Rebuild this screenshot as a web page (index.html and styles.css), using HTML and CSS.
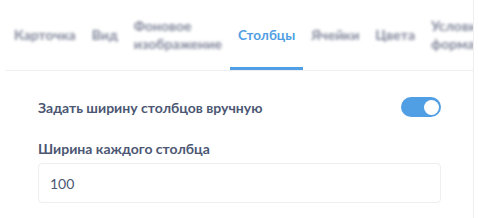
FILE: index.html
```html
<!DOCTYPE html>
<html lang="ru">
<head>
<meta charset="utf-8">
<link rel="stylesheet" href="styles.css">
</head>
<body>
<div class="panel">
  <div class="tabs">
    <div class="tab blur">Карточка</div>
    <div class="tab blur">Вид</div>
    <div class="tab blur">Фоновое<br>изображение</div>
    <div class="tab active">Столбцы</div>
    <div class="tab blur">Ячейки</div>
    <div class="tab blur">Цвета</div>
    <div class="tab blur">Условия<br>форматирования</div>
  </div>
  <div class="body">
    <div class="row">
      <span class="label">Задать ширину столбцов вручную</span>
      <span class="toggle"><span class="knob"></span></span>
    </div>
    <div class="field-label">Ширина каждого столбца</div>
    <div class="input">100</div>
  </div>
</div>
</body>
</html>
```
FILE: styles.css
```css
html, body {
  margin: 0;
  padding: 0;
  background: #fff;
}
body {
  font-family: Lato, "Noto Sans", sans-serif;
  color: #4c5773;
  width: 478px;
  height: 218px;
  overflow: hidden;
}
.panel {
  width: 474px;
  height: 218px;
  border-right: 1px solid #eeeeee;
  box-sizing: border-box;
  overflow: hidden;
}
.tabs {
  display: flex;
  height: 71px;
  margin-left: 6px;
  border-bottom: 1px solid #eeeeee;
  box-sizing: border-box;
  overflow: hidden;
}
.tab {
  flex: none;
  display: flex;
  align-items: center;
  padding: 3px 8px 0;
  font-size: 14px;
  font-weight: 700;
  line-height: 18px;
  white-space: nowrap;
  box-sizing: border-box;
  border-bottom: 3px solid transparent;
}
.tab.blur {
  color: #80869a;
  filter: blur(1.4px);
}
.tab.active {
  font-size: 13.5px;
  color: #509ee3;
  border-bottom-color: #509ee3;
}
.body {
  padding: 0 32px 0 38px;
}
.row {
  display: flex;
  align-items: center;
  justify-content: space-between;
  margin-top: 26px;
  height: 20px;
}
.label {
  font-size: 14px;
  font-weight: 700;
}
.toggle {
  width: 40px;
  height: 20px;
  border-radius: 10px;
  background: #509ee3;
  display: flex;
  align-items: center;
  justify-content: flex-end;
  padding: 0 2px;
  box-sizing: border-box;
}
.knob {
  width: 15px;
  height: 15px;
  border-radius: 50%;
  background: #fff;
}
.field-label {
  margin-top: 23px;
  font-size: 14px;
  font-weight: 700;
  line-height: 18px;
}
.input {
  margin-top: 5px;
  height: 40px;
  box-sizing: border-box;
  border: 1px solid #eeeeee;
  border-radius: 4px;
  padding-left: 11px;
  font-size: 14px;
  display: flex;
  align-items: center;
}
```
